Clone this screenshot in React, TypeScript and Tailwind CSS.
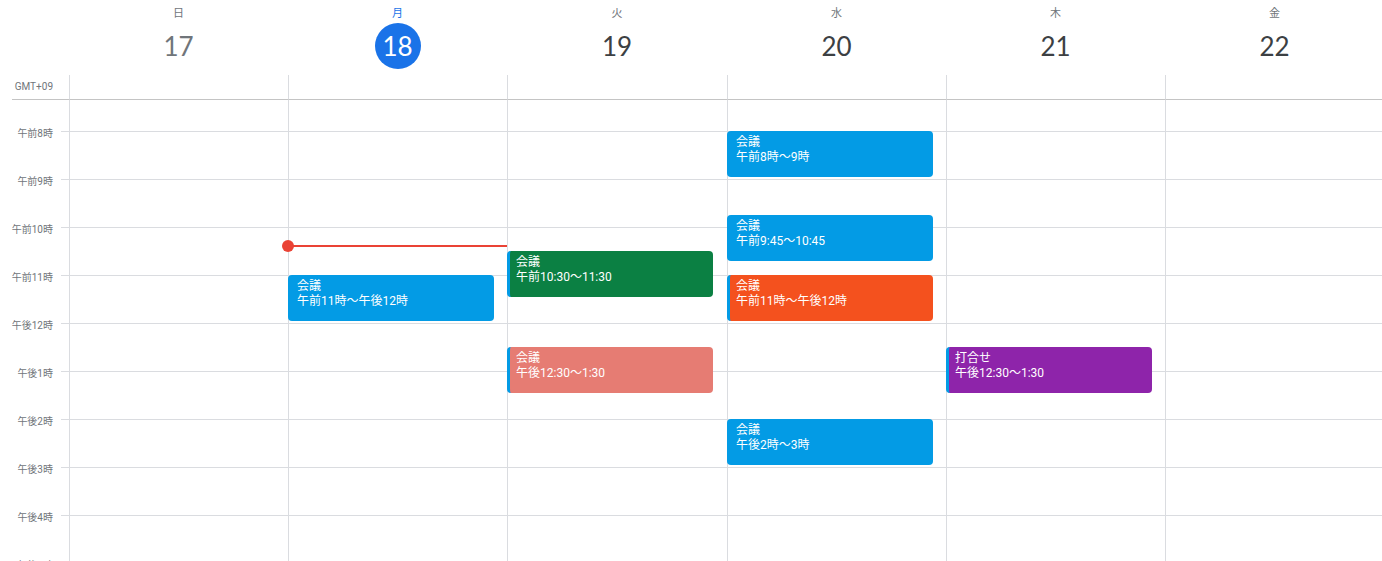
import React from "react";

type CalEvent = {
  title: string;
  time: string;
  start: number;
  end: number;
  color: string;
  strip?: boolean;
};

const days = [
  { dow: "日", date: 17, w: "w-[219px]" },
  { dow: "月", date: 18, w: "w-[219px]", today: true },
  { dow: "火", date: 19, w: "w-[220px]" },
  { dow: "水", date: 20, w: "w-[219px]" },
  { dow: "木", date: 21, w: "w-[219px]" },
  { dow: "金", date: 22, w: "w-[219px]" },
];

const hours = [
  "午前8時",
  "午前9時",
  "午前10時",
  "午前11時",
  "午後12時",
  "午後1時",
  "午後2時",
  "午後3時",
  "午後4時",
  "午後5時",
];

const events: CalEvent[][] = [
  [],
  [{ title: "会議", time: "午前11時〜午後12時", start: 11, end: 12, color: "bg-[#039be5]" }],
  [
    { title: "会議", time: "午前10:30〜11:30", start: 10.5, end: 11.5, color: "bg-[#0b8043]", strip: true },
    { title: "会議", time: "午後12:30〜1:30", start: 12.5, end: 13.5, color: "bg-[#e67c73]", strip: true },
  ],
  [
    { title: "会議", time: "午前8時〜9時", start: 8, end: 9, color: "bg-[#039be5]" },
    { title: "会議", time: "午前9:45〜10:45", start: 9.75, end: 10.75, color: "bg-[#039be5]" },
    { title: "会議", time: "午前11時〜午後12時", start: 11, end: 12, color: "bg-[#f4511e]", strip: true },
    { title: "会議", time: "午後2時〜3時", start: 14, end: 15, color: "bg-[#039be5]" },
  ],
  [{ title: "打合せ", time: "午後12:30〜1:30", start: 12.5, end: 13.5, color: "bg-[#8e24aa]", strip: true }],
  [],
];

// first hour line sits 31px below the top of the grid body, 48px per hour
const HOUR = 48;
const topFor = (h: number) => 31 + (h - 8) * HOUR;

const EventBlock: React.FC<{ ev: CalEvent }> = ({ ev }) => (
  <div
    className={`absolute left-[-1px] w-[206px] rounded-[4px] text-white text-[12px] leading-[15px] pt-[4px] ${ev.color} ${
      ev.strip ? "border-l-[3px] border-[#039be5] pl-[6px]" : "pl-[9px]"
    }`}
    style={{ top: topFor(ev.start), height: (ev.end - ev.start) * HOUR - 2 }}
  >
    <div>{ev.title}</div>
    <div>{ev.time}</div>
  </div>
);

export default function App() {
  return (
    <div className="w-[1385px] h-[561px] overflow-hidden bg-white font-[Roboto,'Noto_Sans_CJK_JP',sans-serif]">
      {/* day header */}
      <div className="flex h-[75px]">
        <div className="w-[69px] shrink-0" />
        {days.map((d) => (
          <div key={d.date} className={`${d.w} shrink-0 flex flex-col items-center pt-[6px]`}>
            <div
              className={`text-[11px] leading-[16px] ${d.today ? "text-[#1a73e8]" : "text-[#70757a]"}`}
            >
              {d.dow}
            </div>
            <div
              className={`mt-[1px] w-[46px] h-[46px] rounded-full flex items-center justify-center text-[26px] font-['Lato',sans-serif] ${
                d.today
                  ? "bg-[#1a73e8] text-white"
                  : d.date === 17
                  ? "text-[#70757a]"
                  : "text-[#3c4043]"
              }`}
            >
              {d.date}
            </div>
          </div>
        ))}
      </div>

      {/* all-day row */}
      <div className="flex h-[25px]">
        <div className="w-[69px] shrink-0 flex flex-col">
          <div className="flex-1 text-right pr-[16px] pt-[6px] text-[10px] leading-[12px] text-[#70757a]">
            GMT+09
          </div>
          <div className="h-px ml-[12px] bg-[#c4c4c4]" />
        </div>
        {days.map((d) => (
          <div key={d.date} className={`${d.w} shrink-0 border-l border-l-[#dadce0] border-b border-b-[#c4c4c4]`} />
        ))}
      </div>

      {/* time grid */}
      <div className="flex h-[461px]">
        <div className="w-[69px] shrink-0 flex flex-col pt-[24px]">
          {hours.map((h) => (
            <div key={h} className="h-[48px] shrink-0 flex">
              <div className="flex-1 text-right pr-[8px] pt-[3px] text-[10px] leading-[14px] text-[#70757a]">{h}</div>
              <div className="w-[8px] h-px mt-[7px] bg-[#dadce0]" />
            </div>
          ))}
        </div>
        {days.map((d, i) => (
          <div key={d.date} className={`${d.w} shrink-0 relative border-l border-[#dadce0] flex flex-col`}>
            <div className="h-[31px] shrink-0" />
            {hours.map((h) => (
              <div key={h} className="h-[48px] shrink-0 border-t border-[#dadce0]" />
            ))}
            {events[i].map((ev, k) => (
              <EventBlock key={k} ev={ev} />
            ))}
            {d.today && (
              <div className="absolute left-[-1px] right-0 top-[145px] h-[2px] bg-[#ea4335]">
                <div className="absolute left-[-6px] top-[-5px] w-[12px] h-[12px] rounded-full bg-[#ea4335]" />
              </div>
            )}
          </div>
        ))}
      </div>
    </div>
  );
}
